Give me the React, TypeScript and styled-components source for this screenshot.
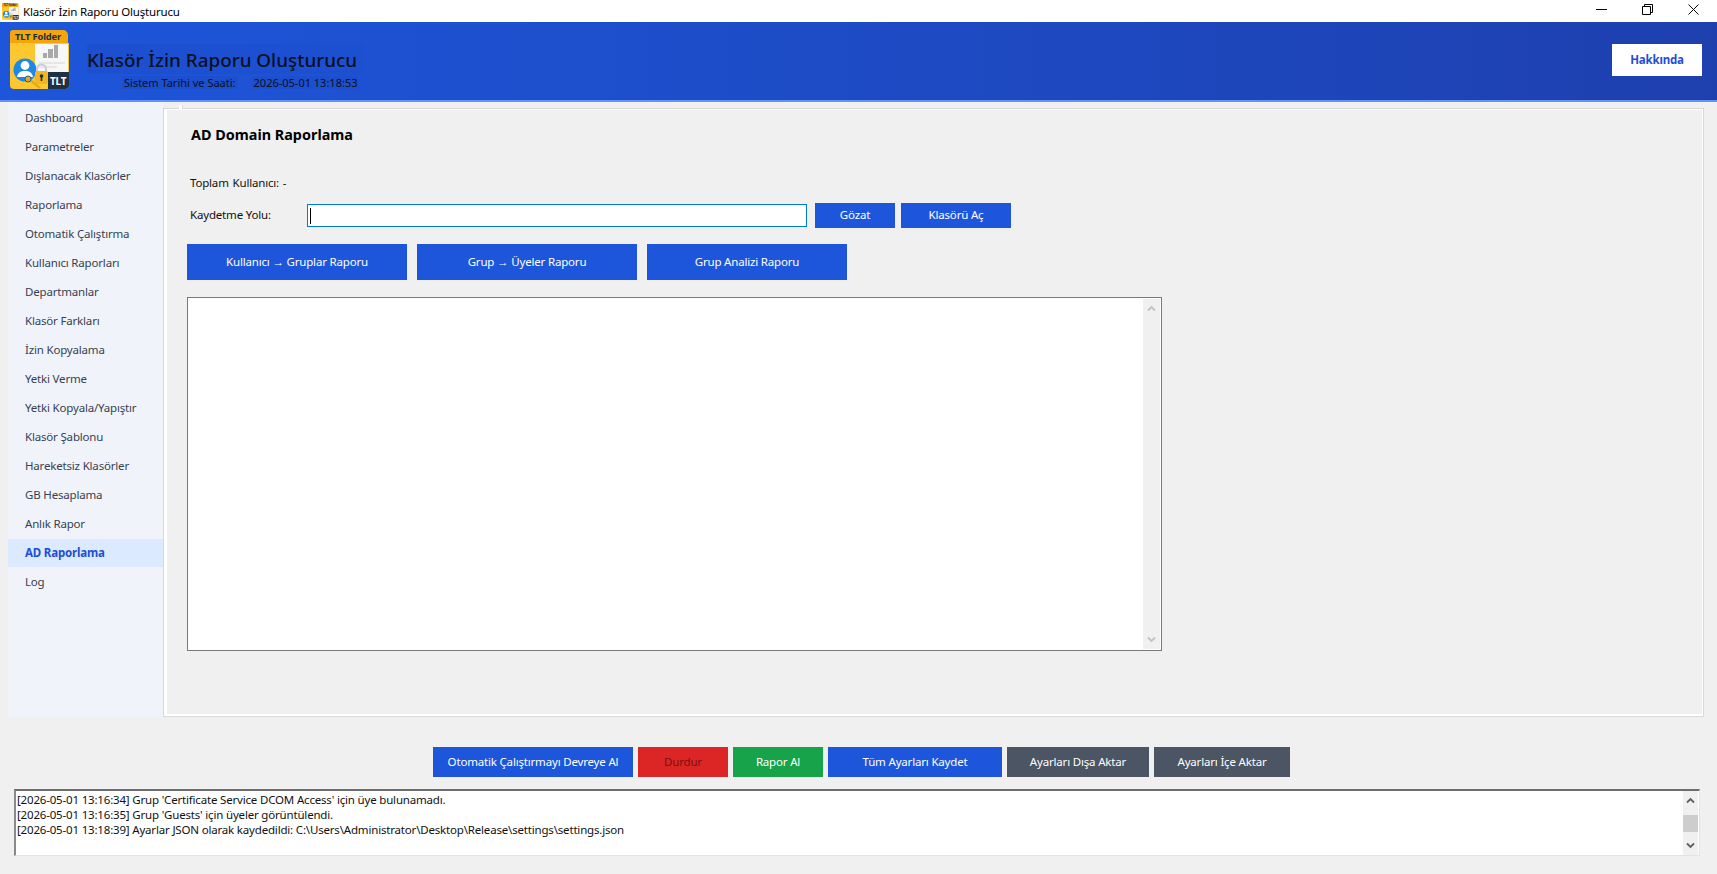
import styled, { createGlobalStyle } from 'styled-components'

const GlobalStyle = createGlobalStyle`
  html, body {
    margin: 0;
    padding: 0;
    background: #f0f0f0;
  }
  body {
    font-family: "Noto Sans", "Open Sans", sans-serif;
    font-size: 11.5px;
    letter-spacing: -0.18px;
    color: #111;
    overflow: hidden;
  }
  * {
    box-sizing: border-box;
  }
`

const Page = styled.div`
  width: 1717px;
  height: 874px;
  display: flex;
  flex-direction: column;
`

const TitleBar = styled.div`
  height: 22px;
  background: #fff;
  display: flex;
  align-items: center;
  padding-left: 2px;
`

const WindowTitle = styled.span`
  margin-left: 4px;
  color: #000;
`

const WindowControls = styled.div`
  margin-left: auto;
  display: flex;
  gap: 35px;
  padding: 0 18px 3px 0;
  align-items: center;
`

const Header = styled.header`
  height: 80px;
  background: linear-gradient(90deg, #1d56db 0%, #1e40af 100%);
  border-bottom: 2px solid #6493f8;
  display: flex;
  align-items: center;
  padding: 0 15px 2px 10px;
`

const HeaderText = styled.div`
  margin: 12px 0 0 17px;
  display: flex;
  flex-direction: column;
  gap: 2px;
  letter-spacing: 0;
`

const AppTitle = styled.h1`
  margin: 0;
  font-size: 18.85px;
  font-weight: 500;
  line-height: 28px;
  color: #0a1024;
  background: #1c50d0;
  padding: 2px 7px 0 0;
`

const ClockRow = styled.div`
  display: flex;
  padding-left: 35px;
  gap: 14px;
  font-size: 11px;
  line-height: 13px;
  color: #0a1024;
`

const ClockText = styled.span`
  background: #1c4fce;
  padding: 0 2px;
`

const AboutButton = styled.button`
  margin-left: auto;
  width: 90px;
  height: 32px;
  border: 0;
  padding: 0 0 2px;
  background: #fff;
  color: #1d4ed8;
  font-family: inherit;
  font-size: 11.5px;
  letter-spacing: inherit;
  font-weight: 700;
`

const Main = styled.main`
  height: 615px;
  display: flex;
  padding: 0 13px 0 8px;
`

const Sidebar = styled.nav`
  width: 155px;
  background: #f0f4fa;
  display: flex;
  flex-direction: column;
  gap: 1px;
  padding-top: 2px;
`

const NavItem = styled.div<{ $active?: boolean }>`
  height: 28px;
  line-height: 28px;
  padding-left: 17px;
  white-space: nowrap;
  color: ${props => (props.$active ? '#1d4ed8' : '#374151')};
  font-weight: ${props => (props.$active ? 700 : 400)};
  background: ${props => (props.$active ? '#dbeafe' : 'transparent')};
`

const Panel = styled.section`
  position: relative;
  flex: 1;
  margin-top: 6px;
  border: 1px solid #d9d9d9;
  background: #f0f0f0;
  box-shadow: inset 3px 1px 0 #fff, inset -1px -2px 0 #fff;
  padding: 16px 0 0 23px;
  display: flex;
  flex-direction: column;
  align-items: flex-start;
`

const TabNotch = styled.span`
  position: absolute;
  left: 15px;
  top: -4px;
  width: 4px;
  height: 4px;
  background: #fff;
  border-right: 1px solid #d9d9d9;
`

const PanelTitle = styled.h2`
  margin: 0 0 0 4px;
  font-size: 14.4px;
  letter-spacing: 0;
  line-height: 20px;
  font-weight: 700;
  color: #000;
`

const StatLine = styled.div`
  margin: 29px 0 0 3px;
  line-height: 18px;
  color: #111;
  word-spacing: 1px;
`

const PathRow = styled.div`
  margin: 11px 0 0 3px;
  display: flex;
  align-items: center;
  height: 25px;
`

const PathLabel = styled.label`
  width: 117px;
  padding-bottom: 2px;
  color: #111;
`

const PathField = styled.div`
  width: 500px;
  height: 23px;
  background: #fff;
  border: 1px solid #0078d7;
  display: flex;
  align-items: center;
  padding-left: 2px;
`

const Caret = styled.span`
  width: 1px;
  height: 16px;
  background: #000;
`

const Button = styled.button<{ $bg?: string; $color?: string; $width: number }>`
  flex: none;
  width: ${props => props.$width}px;
  border: 0;
  padding: 0 0 2px;
  color: ${props => props.$color ?? '#fff'};
  font-family: inherit;
  font-size: 11.5px;
  letter-spacing: inherit;
  white-space: nowrap;
  background: ${props => props.$bg ?? '#1d56db'};
`

const BrowseButton = styled(Button)`
  height: 25px;
  margin-left: 8px;

  & + & {
    margin-left: 6px;
  }
`

const ReportRow = styled.div`
  margin-top: 16px;
  display: flex;
  gap: 10px;
  height: 36px;
`

const Arrow = styled.span`
  font-family: "Liberation Sans", sans-serif;
`

const OutputBox = styled.div`
  margin-top: 17px;
  width: 975px;
  height: 354px;
  background: #fff;
  border: 1px solid #7a7a7a;
  display: flex;
  justify-content: flex-end;
`

const ScrollTrack = styled.div<{ $width: number; $inset: string }>`
  width: ${props => props.$width}px;
  margin: ${props => props.$inset};
  background: #f0f0f0;
  display: flex;
  flex-direction: column;
  align-items: center;
  justify-content: space-between;
  padding: 6px 0;
`

const ScrollThumb = styled.div`
  width: 15px;
  height: 17px;
  background: #cdcdcd;
`

const ActionBar = styled.div`
  margin-top: 30px;
  height: 30px;
  padding-left: 6px;
  display: flex;
  justify-content: center;
  gap: 5px;
`

const LogBox = styled.div`
  margin: 12px 17px 0 14px;
  height: 67px;
  background: #fff;
  border-style: solid;
  border-width: 2px 1px 1px 2px;
  border-color: #6d6d6d #e3e3e3 #e3e3e3 #8a8a8a;
  display: flex;
  justify-content: space-between;
`

const LogLines = styled.div`
  padding: 1px 0 0 1px;
  line-height: 15.2px;
  color: #111;
  white-space: nowrap;
`

const navItems = [
  'Dashboard', 'Parametreler', 'Dışlanacak Klasörler', 'Raporlama', 'Otomatik Çalıştırma',
  'Kullanıcı Raporları', 'Departmanlar', 'Klasör Farkları', 'İzin Kopyalama', 'Yetki Verme',
  'Yetki Kopyala/Yapıştır', 'Klasör Şablonu', 'Hareketsiz Klasörler', 'GB Hesaplama',
  'Anlık Rapor', 'AD Raporlama', 'Log',
]

const actions = [
  { label: 'Otomatik Çalıştırmayı Devreye Al', width: 200, bg: '#1d56db' },
  { label: 'Durdur', width: 90, bg: '#dc2626', color: '#7f1010' },
  { label: 'Rapor Al', width: 90, bg: '#16a34a' },
  { label: 'Tüm Ayarları Kaydet', width: 174, bg: '#1d56db' },
  { label: 'Ayarları Dışa Aktar', width: 142, bg: '#4b5563' },
  { label: 'Ayarları İçe Aktar', width: 136, bg: '#4b5563' },
]

const logLines = [
  "[2026-05-01 13:16:34] Grup 'Certificate Service DCOM Access' için üye bulunamadı.",
  "[2026-05-01 13:16:35] Grup 'Guests' için üyeler görüntülendi.",
  '[2026-05-01 13:18:39] Ayarlar JSON olarak kaydedildi: C:\\Users\\Administrator\\Desktop\\Release\\settings\\settings.json',
]

const Chevron = ({ down, color }: { down?: boolean; color: string }) => (
  <svg width="9" height="7" viewBox="0 0 9 7" fill="none">
    <path
      d={down ? 'M1 1.5 4.5 5 8 1.5' : 'M1 5.5 4.5 2 8 5.5'}
      stroke={color}
      strokeWidth="1.8"
    />
  </svg>
)

const Logo = ({ size }: { size: number }) => (
  <svg width={size} height={size} viewBox="0 0 60 60">
    <path d="M3 0h50a5 5 0 0 1 5 5v9H0V3a3 3 0 0 1 3-3z" fill="#f2a60c" />
    <path d="M0 13h59v42a4 4 0 0 1-4 4H4a4 4 0 0 1-4-4z" fill="#fdc72f" />
    <text x="5" y="10" fontSize="9.4" fontWeight="700" fill="#1f2d3d" fontFamily="Noto Sans, sans-serif">
      TLT Folder
    </text>
    <rect x="25" y="14" width="33" height="33" fill="#f7f7f7" />
    <path d="M33 28h4v-5h-4zM38 28h5v-9h-5zM44 28h4v-13h-4z" fill="#a9a9a9" />
    <path d="M29 33h26M29 37h18" stroke="#d5d5d5" />
    <circle cx="15" cy="40" r="11.5" fill="#1e88e5" />
    <circle cx="15" cy="35.5" r="4.4" fill="#fff" />
    <path d="M7 47c1-5 4-6 8-6s7 1 8 6z" fill="#fff" />
    <path d="M20 50l10 8" stroke="#e7a913" strokeWidth="2.4" />
    <circle cx="18" cy="49" r="3" fill="#e7a913" stroke="#1e5fb0" />
    <path d="M27 42v-3a4.5 4.5 0 0 1 9 0v3" fill="none" stroke="#c9ced6" strokeWidth="2" />
    <rect x="25" y="41" width="13" height="13" rx="2" fill="#f4b51d" />
    <circle cx="31.5" cy="46" r="1.8" fill="#1f2d3d" />
    <path d="M31.5 46v5" stroke="#1f2d3d" strokeWidth="1.6" />
    <path d="M38 42h21v13a4 4 0 0 1-4 4H38z" fill="#1f3142" />
    <text x="40" y="55" fontSize="10" fontWeight="700" fill="#fff" fontFamily="Noto Sans, sans-serif">
      TLT
    </text>
  </svg>
)

export default function App() {
  return (
    <Page>
      <GlobalStyle />
      <TitleBar>
        <Logo size={17} />
        <WindowTitle>Klasör İzin Raporu Oluşturucu</WindowTitle>
        <WindowControls>
          <svg width="11" height="11" viewBox="0 0 11 11">
            <path d="M0 5.5h11" stroke="#000" />
          </svg>
          <svg width="11" height="11" viewBox="0 0 11 11" fill="none">
            <path d="M.5 2.5h8v8h-8zM2.5 2.5v-2h8v8h-2" stroke="#000" />
          </svg>
          <svg width="11" height="11" viewBox="0 0 11 11">
            <path d="M.5.5l10 10M10.5.5l-10 10" stroke="#000" />
          </svg>
        </WindowControls>
      </TitleBar>
      <Header>
        <Logo size={60} />
        <HeaderText>
          <AppTitle>Klasör İzin Raporu Oluşturucu</AppTitle>
          <ClockRow>
            <ClockText>Sistem Tarihi ve Saati:</ClockText>
            <ClockText>2026-05-01 13:18:53</ClockText>
          </ClockRow>
        </HeaderText>
        <AboutButton>Hakkında</AboutButton>
      </Header>
      <Main>
        <Sidebar>
          {navItems.map(item => (
            <NavItem key={item} $active={item === 'AD Raporlama'}>
              {item}
            </NavItem>
          ))}
        </Sidebar>
        <Panel>
          <TabNotch />
          <PanelTitle>AD Domain Raporlama</PanelTitle>
          <StatLine>Toplam Kullanıcı: -</StatLine>
          <PathRow>
            <PathLabel>Kaydetme Yolu:</PathLabel>
            <PathField>
              <Caret />
            </PathField>
            <BrowseButton $width={80}>Gözat</BrowseButton>
            <BrowseButton $width={110}>Klasörü Aç</BrowseButton>
          </PathRow>
          <ReportRow>
            <Button $width={220}>Kullanıcı <Arrow>→</Arrow> Gruplar Raporu</Button>
            <Button $width={220}>Grup <Arrow>→</Arrow> Üyeler Raporu</Button>
            <Button $width={200}>Grup Analizi Raporu</Button>
          </ReportRow>
          <OutputBox>
            <ScrollTrack $width={17} $inset="1px">
              <Chevron color="#c2c2c2" />
              <Chevron down color="#c2c2c2" />
            </ScrollTrack>
          </OutputBox>
        </Panel>
      </Main>
      <ActionBar>
        {actions.map(action => (
          <Button key={action.label} $width={action.width} $bg={action.bg} $color={action.color}>
            {action.label}
          </Button>
        ))}
      </ActionBar>
      <LogBox>
        <LogLines>
          {logLines.map(line => (
            <div key={line}>{line}</div>
          ))}
        </LogLines>
        <ScrollTrack $width={15} $inset="0 1px 0 0">
          <Chevron color="#606060" />
          <ScrollThumb />
          <Chevron down color="#606060" />
        </ScrollTrack>
      </LogBox>
    </Page>
  )
}
